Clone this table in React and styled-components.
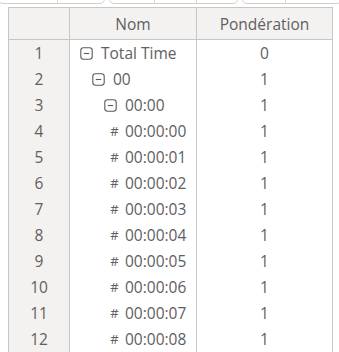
import React from "react";
import styled, { createGlobalStyle } from "styled-components";

const Global = createGlobalStyle`
  html, body { margin: 0; padding: 0; background: #fff; }
  body { font-family: "Open Sans", "Noto Sans", sans-serif; overflow: hidden; }
`;

const Page = styled.div`
  width: 339px;
  height: 352px;
  overflow: hidden;
  background: #fff;
`;

const Toolbar = styled.div`
  display: flex;
  gap: 4px;
  margin-top: -16px;
  margin-left: -2px;
`;

const Group = styled.div`
  display: flex;
  width: ${(p) => p.$w}px;
  height: 20px;
  border: 1px solid #d0cecc;
  border-radius: 5px;
  background: #fff;
  box-sizing: border-box;
`;

const Seg = styled.div`
  width: ${(p) => p.$w}px;
  border-right: 1px solid #dcdad8;
  &:last-child { border-right: none; }
`;

const Table = styled.table`
  border-collapse: collapse;
  margin: 3px 0 0 8px;
  table-layout: fixed;
  color: #606060;
  font-size: 15.5px;
  line-height: 20px;
`;

const Th = styled.th`
  height: 31px;
  width: ${(p) => p.$w}px;
  padding: 0;
  background: #f3f2f1;
  border: 1px solid #c8c6c4;
  font-weight: 400;
  text-align: center;
  color: #606060;
`;

const Num = styled.td`
  height: 26px;
  padding: 0;
  background: #f3f2f1;
  border-left: 1px solid #c8c6c4;
  border-right: 1px solid #c8c6c4;
  text-align: center;
`;

const NameCell = styled.td`
  padding: 0;
  border-right: 1px solid #c8c6c4;
  white-space: nowrap;
  overflow: hidden;
`;

const NameInner = styled.div`
  display: flex;
  align-items: center;
  gap: ${(p) => (p.$leaf ? 6 : 8)}px;
  padding-left: ${(p) => p.$indent}px;
`;

const Val = styled.td`
  padding: 0;
  border-right: 1px solid #c8c6c4;
  text-align: center;
`;

const Hash = styled.span`
  font-size: 13px;
  width: 9px;
  text-align: center;
`;

const Collapse = () => (
  <svg width="13" height="13" viewBox="0 0 13 13" style={{ flex: "none" }}>
    <rect x="0.8" y="0.8" width="11.4" height="11.4" rx="2.6" fill="none" stroke="#5a5a5a" strokeWidth="1.1" />
    <line x1="3.8" y1="6.5" x2="9.2" y2="6.5" stroke="#5a5a5a" strokeWidth="1.1" />
  </svg>
);

const rows = [
  { n: 1, name: "Total Time", level: 0, v: 0 },
  { n: 2, name: "00", level: 1, v: 1 },
  { n: 3, name: "00:00", level: 2, v: 1 },
  ...Array.from({ length: 9 }, (_, i) => ({
    n: 4 + i,
    name: `00:00:0${i}`,
    leaf: true,
    v: 1,
  })),
];

export default function App() {
  return (
    <Page>
      <Global />
      <Toolbar>
        <Group $w={107}>
          <Seg $w={60} />
          <Seg $w={47} />
        </Group>
        <Group $w={129}>
          <Seg $w={45} />
          <Seg $w={43} />
          <Seg $w={41} />
        </Group>
        <Group $w={100}>
          <Seg $w={43} />
          <Seg $w={57} />
        </Group>
      </Toolbar>
      <Table>
        <thead>
          <tr>
            <Th $w={60}></Th>
            <Th $w={126}>Nom</Th>
            <Th $w={135}>Pondération</Th>
          </tr>
        </thead>
        <tbody>
          {rows.map((r) => (
            <tr key={r.n}>
              <Num>{r.n}</Num>
              <NameCell>
                {r.leaf ? (
                  <NameInner $leaf $indent={40}>
                    <Hash>#</Hash>
                    <span>{r.name}</span>
                  </NameInner>
                ) : (
                  <NameInner $indent={10 + r.level * 12}>
                    <Collapse />
                    <span>{r.name}</span>
                  </NameInner>
                )}
              </NameCell>
              <Val>{r.v}</Val>
            </tr>
          ))}
        </tbody>
      </Table>
    </Page>
  );
}
